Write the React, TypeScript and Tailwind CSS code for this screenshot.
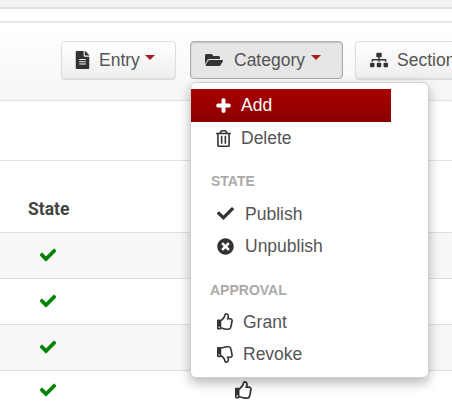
import { FaFileAlt, FaFolderOpen, FaSitemap, FaPlus, FaRegTrashAlt, FaCheck, FaTimesCircle, FaRegThumbsUp, FaRegThumbsDown } from "react-icons/fa";
import type { ReactNode } from "react";

function Caret({ gap }: { gap: string }) {
  return <span className={"mb-[5px] inline-block h-0 w-0 border-x-[5px] border-t-[5px] border-x-transparent border-t-[#a81c1c] " + gap} />;
}

function ToolButton({ icon, label, active, caretGap, iconBox, className }: { icon: ReactNode; label: string; active?: boolean; caretGap?: string; iconBox: string; className: string }) {
  return (
    <div
      className={
        "flex h-[38px] shrink-0 items-center overflow-hidden rounded-[4px] border text-[17.5px] text-[#555] " +
        (active
          ? "border-[#aaaaaa] bg-[#e6e6e6] shadow-[inset_0_1px_2px_rgba(0,0,0,0.15)] "
          : "border-[#ddd] bg-gradient-to-b from-white to-[#eeeeee] shadow-[0_1px_1px_rgba(0,0,0,0.12)] ") +
        className
      }
    >
      <span className={"flex justify-center text-[18px] text-[#333] " + iconBox}>{icon}</span>
      {label}
      {caretGap && <Caret gap={caretGap} />}
    </div>
  );
}

function Row({ shaded, height, last }: { shaded: boolean; height: string; last?: boolean }) {
  return (
    <div className={"flex items-center border-t border-[#dedede] pb-[2px] pl-[40px] " + height + (shaded ? " bg-[#f7f7f7]" : " bg-white")}>
      <FaCheck className="text-[16px] text-[#008000] [stroke-width:25]" />
      {last && <FaRegThumbsUp className="ml-[179px] text-[18px] text-[#333]" />}
    </div>
  );
}

function MenuItem({ icon, label, gap, pad }: { icon: ReactNode; label: string; gap: string; pad: string }) {
  return (
    <div className={"flex h-[32.5px] items-center text-[17.5px] text-[#555] " + pad}>
      <span className={"flex w-[17px] justify-center text-[17px] text-[#333] " + gap}>{icon}</span>
      {label}
    </div>
  );
}

function Heading({ label, className }: { label: string; className: string }) {
  return <div className={"text-[14px] font-bold uppercase leading-[16px] text-[#aaaaaa] " + className}>{label}</div>;
}

export default function App() {
  return (
    <div className="relative h-[402px] w-[452px] overflow-hidden bg-white font-['Liberation_Sans',Arial,sans-serif]">
      <div className="h-[9px] border-b-2 border-[#e0e0e0] bg-[#f2f2f2]" />
      <div className="h-[14px] border-b-2 border-[#e8e8e8] bg-white" />
      <div className="flex h-[78px] items-start gap-[14px] border-b border-[#e2e2e2] bg-gradient-to-b from-white to-[#f6f6f6] pl-[61px] pt-[18px]">
        <ToolButton icon={<FaFileAlt />} iconBox="mr-[9px] w-[15px]" label="Entry" caretGap="ml-[5px]" className="w-[115px] pl-[13px]" />
        <ToolButton icon={<FaFolderOpen />} iconBox="mr-[10px] w-[21px]" label="Category" caretGap="ml-[6px]" active className="w-[153px] pl-[12px]" />
        <ToolButton icon={<FaSitemap />} iconBox="mr-[9px] w-[19px]" label="Section" className="ml-[-2px] w-[120px] pl-[13px]" />
      </div>
      <div className="h-[60px] border-b border-[#e2e2e2] bg-white" />
      <div className="flex h-[71px] items-center bg-white pl-[28px] pt-[25px] font-['Roboto',sans-serif] text-[17.5px] font-bold text-[#444]">State</div>
      <Row shaded height="h-[46px]" />
      <Row shaded={false} height="h-[46px]" />
      <Row shaded height="h-[46px]" />
      <Row shaded={false} height="h-[40px]" last />

      <div className="absolute left-[190px] top-[82px] h-[296px] w-[239px] rounded-[6px] border border-[#d0d0d0] bg-white pt-[6px] shadow-[0_5px_12px_rgba(0,0,0,0.28)]">
        <div className="flex h-[33px] w-[200px] items-center bg-gradient-to-b from-[#aa0000] to-[#8a0000] pl-[25px] text-[17.5px] text-white">
          <FaPlus className="mr-[10px] text-[15px] [stroke-width:40]" />
          Add
        </div>
        <MenuItem icon={<FaRegTrashAlt />} label="Delete" gap="mr-[9px]" pad="pl-[24px]" />
        <Heading label="State" className="mt-[18px] pl-[20px]" />
        <div className="mt-[9px]">
          <MenuItem icon={<FaCheck />} label="Publish" gap="mr-[11px]" pad="pl-[26px]" />
          <MenuItem icon={<FaTimesCircle />} label="Unpublish" gap="mr-[11px]" pad="pl-[26px]" />
        </div>
        <Heading label="Approval" className="mt-[19px] pl-[19px]" />
        <div className="mt-[8px]">
          <MenuItem icon={<FaRegThumbsUp />} label="Grant" gap="mr-[9px]" pad="pl-[26px]" />
          <MenuItem icon={<FaRegThumbsDown />} label="Revoke" gap="mr-[9px]" pad="pl-[26px]" />
        </div>
      </div>
    </div>
  );
}
